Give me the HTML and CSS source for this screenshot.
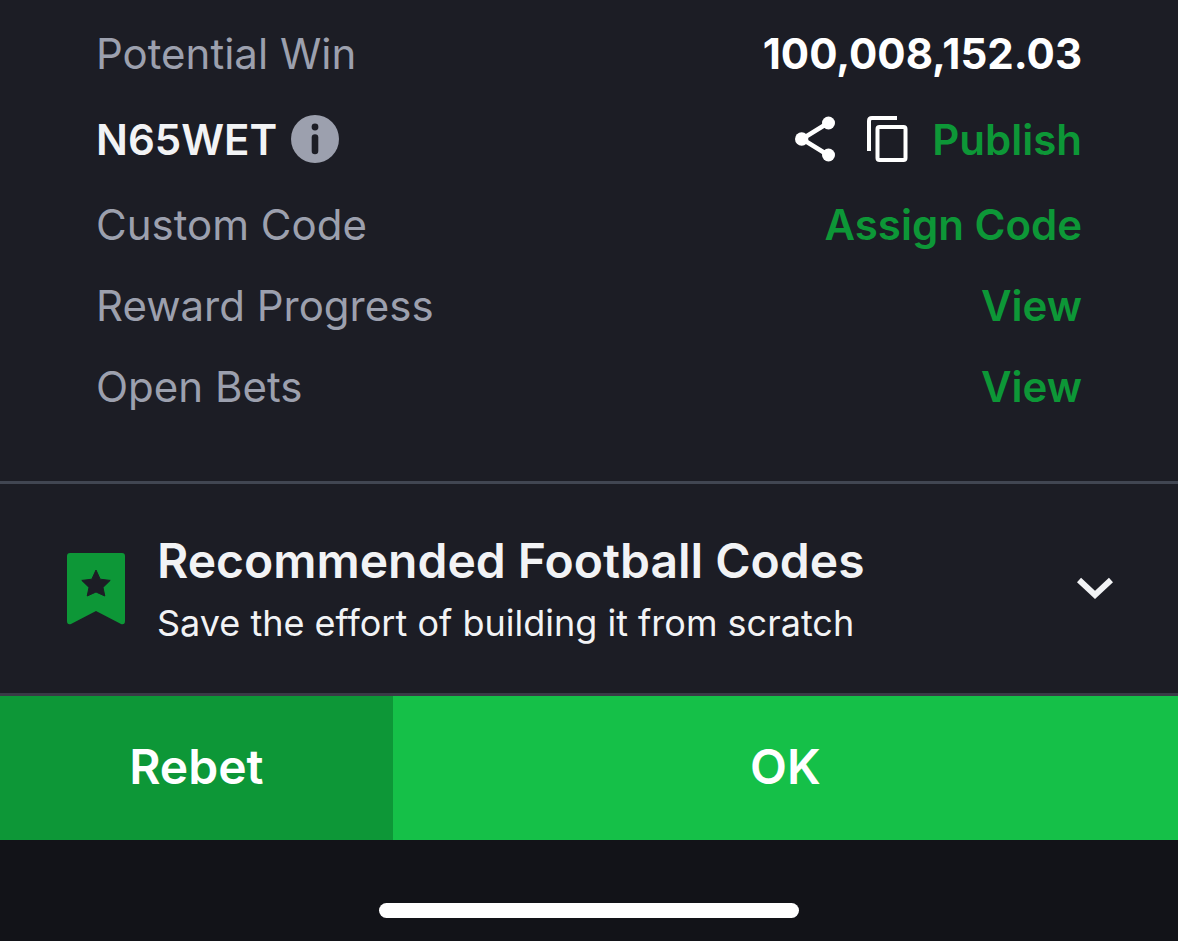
FILE: index.html
```html
<!DOCTYPE html>
<html lang="en">
<head>
  <meta charset="UTF-8">
  <meta name="viewport" content="width=device-width, initial-scale=1.0">
  <title>Bet Details</title>
  <link rel="stylesheet" href="styles.css">
</head>
<body>
  <div class="sheet">
    <!-- Bet details -->
    <div class="details">
      <div class="row">
        <span class="label">Potential Win</span>
        <span class="amount">100,008,152.03</span>
      </div>
      <div class="row code-row">
        <div class="code">
          <span>N65WET</span>
          <button class="icon-button" aria-label="Code info">
            <svg width="48" height="48" viewBox="0 0 48 48">
              <circle cx="24" cy="24" r="24" fill="#9ca0ae"/>
              <circle cx="24" cy="12" r="3.400" fill="#1c1d25"/>
              <path d="M24 22.500v13.500" stroke="#1c1d25" stroke-width="6.600" stroke-linecap="round"/>
            </svg>
          </button>
        </div>
        <div class="code-actions">
          <button class="icon-button" aria-label="Share">
            <svg width="40" height="46" viewBox="0 0 40 46">
              <path d="M33 7L7 23l26 16" fill="none" stroke="#fff" stroke-width="4.500"/>
              <circle cx="33.500" cy="7" r="6.500" fill="#fff"/>
              <circle cx="6.700" cy="23" r="6.700" fill="#fff"/>
              <circle cx="33.500" cy="39" r="6.500" fill="#fff"/>
            </svg>
          </button>
          <button class="icon-button" aria-label="Copy">
            <svg width="41" height="47" viewBox="0 0 41 47" fill="none" stroke="#fff" stroke-width="4">
              <path d="M2 34V4q0-3 3-3h25" transform="translate(0 1)"/>
              <rect x="10.500" y="11" width="28" height="33" rx="2"/>
            </svg>
          </button>
          <a class="action" href="#">Publish</a>
        </div>
      </div>
      <div class="row">
        <span class="label">Custom Code</span>
        <a class="action" href="#">Assign Code</a>
      </div>
      <div class="row">
        <span class="label">Reward Progress</span>
        <a class="action" href="#">View</a>
      </div>
      <div class="row">
        <span class="label">Open Bets</span>
        <a class="action" href="#">View</a>
      </div>
    </div>

    <!-- Recommended codes -->
    <div class="recommended">
      <svg class="bookmark" width="58" height="74" viewBox="0 0 58 74">
        <path d="M3 2h52q3 0 3 3v65q0 4-4 3L29 60 4 73q-4 1-4-3V5q0-3 3-3z" fill="#0d9737"/>
        <path d="M29 19l4.200 9.200 10 1.200-7.200 7 1.800 8.600-8.800-4-8.800 4 1.800-8.600-7.200-7 10-1.200z" fill="#1c1d25" stroke="#1c1d25" stroke-width="1" stroke-linejoin="round"/>
      </svg>
      <div class="recommended-text">
        <h2>Recommended Football Codes</h2>
        <p>Save the effort of building it from scratch</p>
      </div>
      <button class="icon-button" aria-label="Expand">
        <svg width="36" height="24" viewBox="0 0 36 24">
          <path d="M2 4l16 15L34 4" fill="none" stroke="#f2f3f5" stroke-width="6"/>
        </svg>
      </button>
    </div>

    <div class="buttons">
      <button class="rebet">Rebet</button>
      <button class="ok">OK</button>
    </div>
  </div>

  <div class="home-bar">
    <div class="home-indicator"></div>
  </div>
</body>
</html>
```
FILE: styles.css
```css
* {
  box-sizing: border-box;
}

body {
  margin: 0;
  min-height: 100vh;
  background: #121318;
  color: #f2f3f5;
  font-family: Inter, "Liberation Sans", sans-serif;
}

button {
  border: none;
  padding: 0;
  color: #fff;
  font-family: inherit;
  cursor: pointer;
}

svg {
  display: block;
}

.sheet {
  background: #1c1d25;
}

/* Bet details */
.details {
  display: flex;
  flex-direction: column;
  gap: 30px;
  padding: 28px 96px 69px;
  border-bottom: 3px solid #414652;
}

.row {
  display: flex;
  justify-content: space-between;
  align-items: center;
  font-size: 42px;
  line-height: 51px;
}

.label {
  color: #9ca0ae;
}

.amount {
  color: #fff;
  font-weight: 700;
}

.action {
  color: #0d9737;
  font-weight: 600;
  text-decoration: none;
}

.code-row {
  height: 60px;
}

.code {
  display: flex;
  align-items: center;
  gap: 14px;
  font-weight: 600;
}

.code-actions {
  display: flex;
  align-items: center;
}

.code-actions .icon-button {
  margin-right: 32px;
}

.code-actions .icon-button + .icon-button {
  margin-right: 24px;
}

.icon-button {
  background: none;
}

/* Recommended codes */
.recommended {
  display: flex;
  align-items: center;
  padding: 47px 65px 48px 67px;
  border-bottom: 3px solid #393b46;
}

.recommended-text {
  flex: 1;
  margin-left: 32px;
}

.recommended h2 {
  margin: 0 0 10px;
  font-size: 48px;
  font-weight: 600;
  line-height: 60px;
}

.recommended p {
  margin: 0;
  font-size: 36px;
  line-height: 44px;
}

/* Bottom buttons */
.buttons {
  display: grid;
  grid-template-columns: 1fr 2fr;
}

.buttons button {
  height: 144px;
  padding-bottom: 3px;
  font-size: 48px;
  font-weight: 600;
}

.rebet {
  background: #0d9737;
}

.ok {
  background: #15c048;
}

.home-bar {
  display: flex;
  justify-content: center;
  padding: 63px 0 23px;
}

.home-indicator {
  width: 420px;
  height: 15px;
  border-radius: 8px;
  background: #fff;
}
```
